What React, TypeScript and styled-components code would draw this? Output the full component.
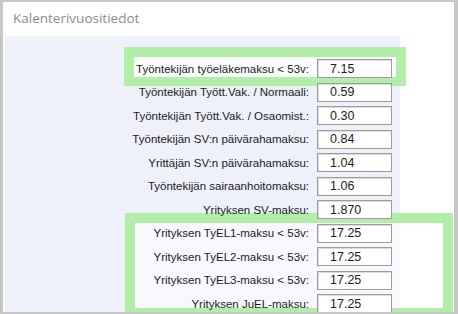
import React from "react";
import styled, { createGlobalStyle } from "styled-components";

const GlobalStyle = createGlobalStyle`
  body {
    margin: 0;
    background: #ffffff;
  }
`;

const Frame = styled.div`
  position: relative;
  width: 458px;
  height: 314px;
  box-sizing: border-box;
  border-style: solid;
  border-color: #c7c7c7;
  border-width: 2px 4px 2px 3px;
  background: #ffffff;
  overflow: hidden;
  display: flex;
  flex-direction: column;
`;

const Header = styled.header`
  height: 34px;
  flex: none;
  display: flex;
  align-items: center;
  padding-left: 10px;
  padding-bottom: 2px;
  box-sizing: border-box;
`;

const Title = styled.h3`
  margin: 0;
  font-family: "Open Sans", "Noto Sans", sans-serif;
  font-weight: 400;
  font-size: 13.5px;
  color: #8c8c8c;
`;

const Panel = styled.main`
  position: relative;
  margin-left: 2px;
  width: 395px;
  flex: 1;
  background: #eef1f9;
  padding-top: 23px;
  box-sizing: border-box;
`;

const FormGrid = styled.div`
  position: relative;
  z-index: 1;
  display: grid;
  grid-template-columns: 304px 75px;
  column-gap: 8px;
  row-gap: 4.5px;
`;

const Label = styled.label`
  display: flex;
  align-items: center;
  justify-content: flex-end;
  height: 19px;
  font-family: "Liberation Sans", Arial, sans-serif;
  font-size: 11.5px;
  color: #1c1c1c;
  white-space: nowrap;
`;

const ValueInput = styled.input`
  height: 19px;
  width: 75px;
  box-sizing: border-box;
  margin: 0;
  padding: 0 0 0 12px;
  border: 1px solid #9c9c9c;
  box-shadow: inset 1px 1px 0 #dcdcdc;
  background: #ffffff;
  font-family: "Liberation Sans", Arial, sans-serif;
  font-size: 12.5px;
  color: #1c1c1c;
  outline: none;
`;

const Highlight = styled.div<{ $left: number; $top: number; $width: number; $height: number; $fill: string }>`
  position: absolute;
  z-index: 0;
  left: ${(p) => p.$left}px;
  top: ${(p) => p.$top}px;
  width: ${(p) => p.$width}px;
  height: ${(p) => p.$height}px;
  box-sizing: border-box;
  border: 10px solid #b2eea7;
  border-bottom-width: 9px;
  background: ${(p) => p.$fill};
  pointer-events: none;
`;

const rows = [
  { label: "Työntekijän työeläkemaksu < 53v:", value: "7.15" },
  { label: "Työntekijän Tyött.Vak. / Normaali:", value: "0.59" },
  { label: "Työntekijän Tyött.Vak. / Osaomist.:", value: "0.30" },
  { label: "Työntekijän SV:n päivärahamaksu:", value: "0.84" },
  { label: "Yrittäjän SV:n päivärahamaksu:", value: "1.04" },
  { label: "Työntekijän sairaanhoitomaksu:", value: "1.06" },
  { label: "Yrityksen SV-maksu:", value: "1.870" },
  { label: "Yrityksen TyEL1-maksu < 53v:", value: "17.25" },
  { label: "Yrityksen TyEL2-maksu < 53v:", value: "17.25" },
  { label: "Yrityksen TyEL3-maksu < 53v:", value: "17.25" },
  { label: "Yrityksen JuEL-maksu:", value: "17.25" },
];

export default function App() {
  return (
    <>
      <GlobalStyle />
      <Frame>
        <Header>
          <Title>Kalenterivuositiedot</Title>
        </Header>
        <Panel>
          <FormGrid>
            {rows.map((row) => (
              <React.Fragment key={row.label}>
                <Label>{row.label}</Label>
                <ValueInput defaultValue={row.value} readOnly />
              </React.Fragment>
            ))}
          </FormGrid>
        </Panel>
        {/* annotation boxes over the form */}
        <Highlight $left={121} $top={45} $width={282} $height={39} $fill="rgba(255,255,255,0.75)" />
        <Highlight $left={122} $top={211} $width={328} $height={104} $fill="rgba(255,255,255,0.5)" />
      </Frame>
    </>
  );
}
